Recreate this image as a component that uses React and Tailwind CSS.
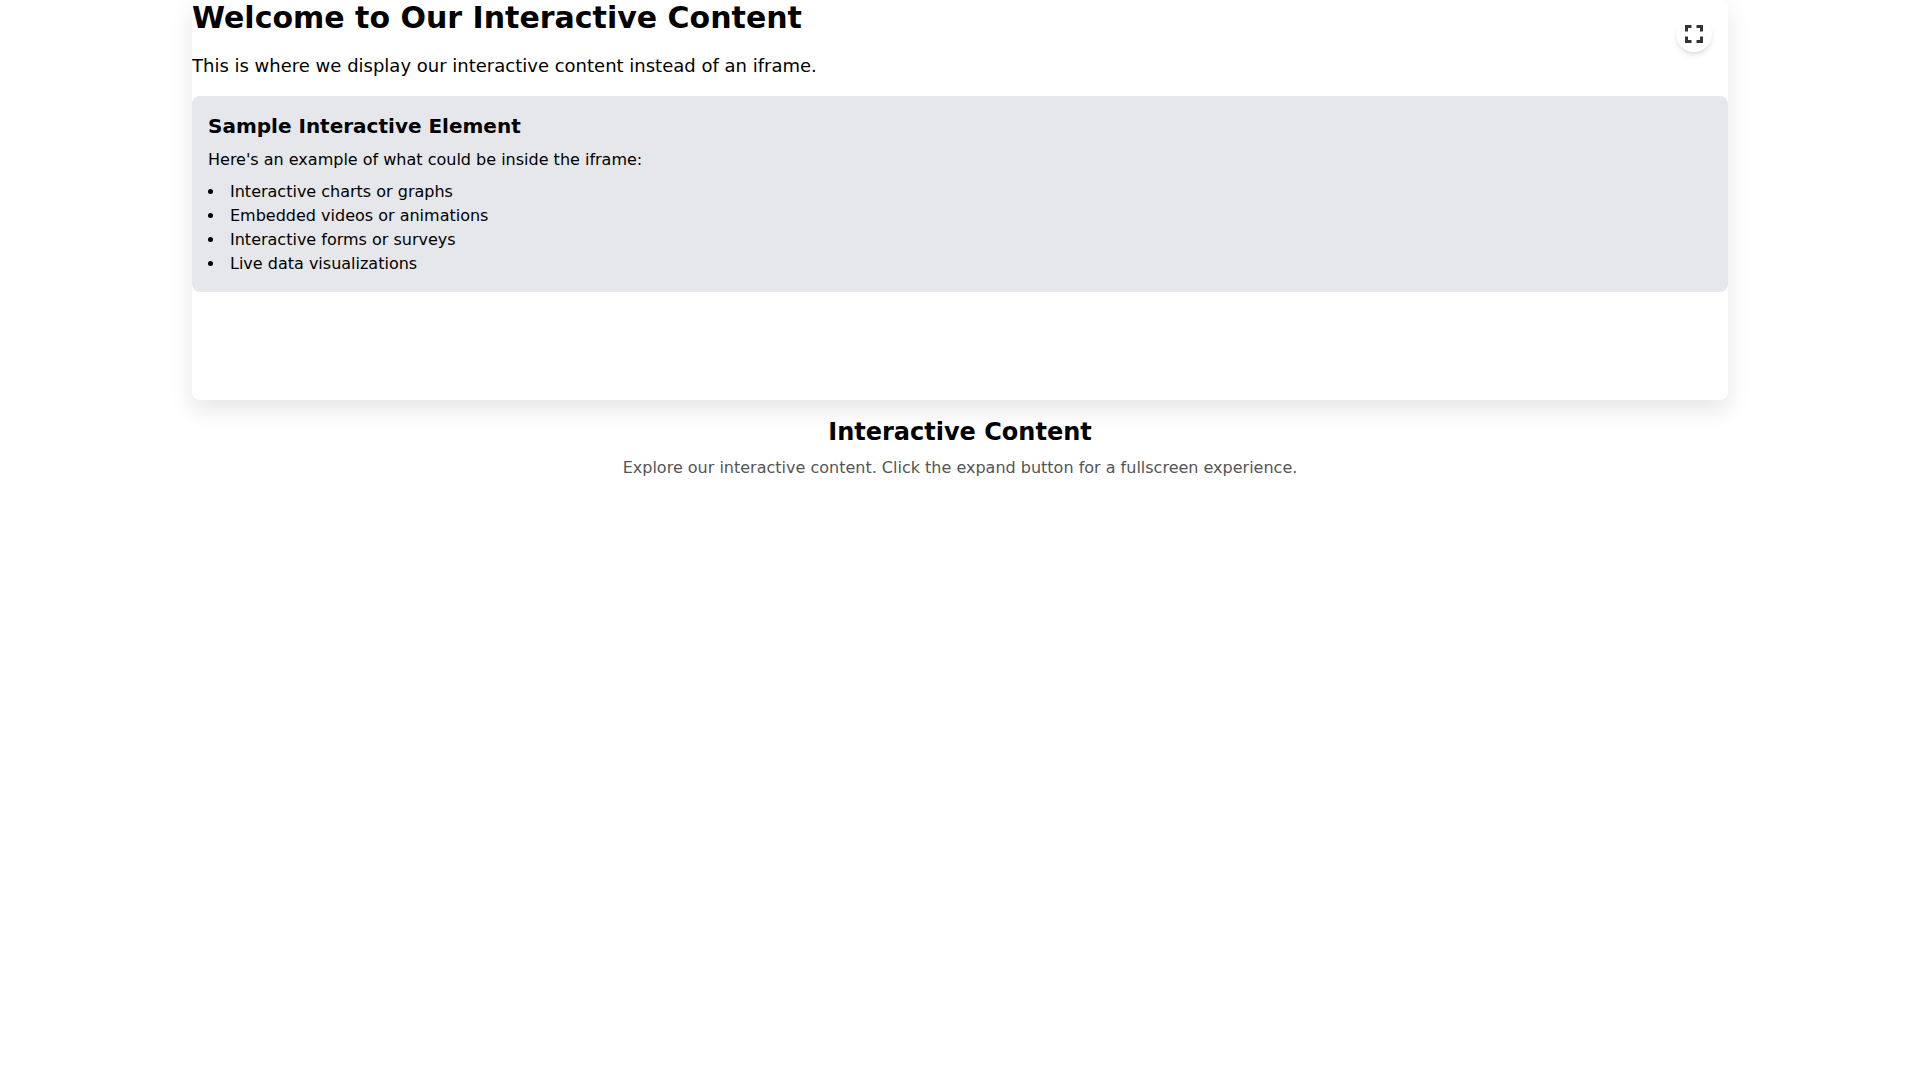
import React from 'react';

const items = [
  'Interactive charts or graphs',
  'Embedded videos or animations',
  'Interactive forms or surveys',
  'Live data visualizations',
];

const App = () => {
  return (
    <div className="min-h-screen bg-white text-black font-['DejaVu_Sans',sans-serif]">
      <div className="w-[1536px] mx-auto">
        {/* Content card */}
        <div className="relative h-[400px] rounded-lg bg-white shadow-[0_10px_25px_rgba(0,0,0,0.1)] overflow-hidden">
          <button className="absolute top-4 right-4 w-9 h-9 rounded-full bg-white shadow-md flex items-center justify-center text-[#333333]">
            <svg viewBox="0 0 18 18" className="w-[18px] h-[18px]" fill="none" stroke="currentColor" strokeWidth="3">
              <path d="M1.5 6.5v-5h5M11.5 1.5h5v5M16.5 11.5v5h-5M6.5 16.5h-5v-5" />
            </svg>
          </button>
          <h1 className="text-3xl font-bold mb-4">Welcome to Our Interactive Content</h1>
          <p className="text-lg mb-4">This is where we display our interactive content instead of an iframe.</p>
          <div className="bg-gray-200 rounded-lg p-4">
            <h3 className="text-xl font-bold mb-2">Sample Interactive Element</h3>
            <p className="mb-2">Here's an example of what could be inside the iframe:</p>
            <ul className="list-disc list-inside">
              {items.map((item) => (
                <li key={item}>{item}</li>
              ))}
            </ul>
          </div>
        </div>

        {/* Caption */}
        <div className="p-4 text-center">
          <h2 className="text-2xl font-bold mb-2">Interactive Content</h2>
          <p className="text-[#555555]">Explore our interactive content. Click the expand button for a fullscreen experience.</p>
        </div>
      </div>
    </div>
  );
};

export default App;
